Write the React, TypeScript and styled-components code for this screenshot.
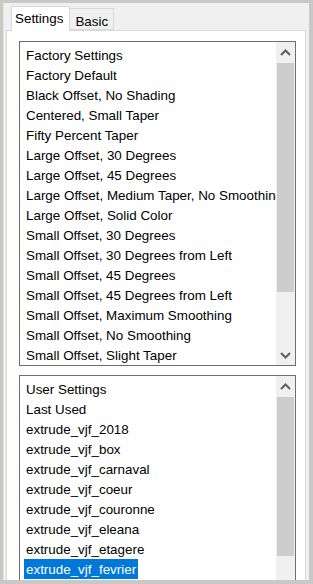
import styled, { createGlobalStyle } from "styled-components";

const GlobalStyle = createGlobalStyle`
  html, body {
    margin: 0;
    padding: 0;
    background: #c8c8c8;
    overflow: hidden;
  }
  body {
    font-family: "Liberation Sans", Arial, sans-serif;
    font-size: 13.4px;
    color: #000;
  }
`;

const Frame = styled.div`
  width: 313px;
  height: 584px;
  padding: 3px 4px 4px 3px;
  box-sizing: border-box;
  background: #c8c8c8;
`;

const Window = styled.div`
  height: 577px;
  background: #f0f0f0;
  border-left: 1px solid #e3e8c8;
  padding: 0 3px 0 2px;
  display: flex;
  flex-direction: column;
  overflow: hidden;
`;

const TabStrip = styled.div`
  height: 27px;
  display: flex;
  align-items: flex-end;
  padding-left: 5px;
  position: relative;
  z-index: 1;
`;

const Tab = styled.div<{ $active?: boolean }>`
  box-sizing: border-box;
  height: ${(p) => (p.$active ? "25px" : "22px")};
  margin-bottom: ${(p) => (p.$active ? "-1px" : "0")};
  padding: ${(p) => (p.$active ? "3px 6px 0 3px" : "4px 5px 0 5px")};
  background: ${(p) => (p.$active ? "#fff" : "#f0f0f0")};
  border: 1px solid #d9d9d9;
  border-bottom: ${(p) => (p.$active ? "none" : "1px solid #d9d9d9")};
  border-left: ${(p) => (p.$active ? "1px solid #d9d9d9" : "none")};
  line-height: 17px;
`;

const Panel = styled.div`
  flex: 1;
  background: #fff;
  border: 1px solid #d9d9d9;
  border-bottom: none;
  padding: 10px 9px 0 12px;
  display: flex;
  flex-direction: column;
  gap: 9px;
  min-height: 0;
`;

const ListBox = styled.div<{ $height: number }>`
  height: ${(p) => p.$height}px;
  flex-shrink: 0;
  border: 1px solid #6e6e6e;
  display: flex;
  background: #fff;
  overflow: hidden;
`;

const Items = styled.div`
  flex: 1;
  min-width: 0;
  padding-top: 3px;
  overflow: hidden;
`;

const Row = styled.div`
  height: 20px;
  padding-left: 4px;
  white-space: nowrap;
  overflow: hidden;
`;

const Label = styled.span<{ $selected?: boolean }>`
  display: inline-block;
  box-sizing: border-box;
  height: 20px;
  line-height: 19px;
  padding: 1px 2px 0;
  background: ${(p) => (p.$selected ? "#0078d7" : "transparent")};
  color: ${(p) => (p.$selected ? "#fff" : "#000")};
`;

const ScrollBar = styled.div`
  width: 19px;
  flex-shrink: 0;
  background: #f0f0f0;
  display: flex;
  flex-direction: column;
`;

const Arrow = styled.div`
  height: 20px;
  flex-shrink: 0;
  display: flex;
  align-items: center;
  justify-content: center;
`;

const Track = styled.div<{ $before: number; $after: number }>`
  flex: 1;
  padding: ${(p) => `${p.$before}px 0 ${p.$after}px`};
  display: flex;
  flex-direction: column;
`;

const Thumb = styled.div`
  flex: 1;
  background: #cdcdcd;
  margin: 0 1px;
`;

function Chevron({ up }: { up?: boolean }) {
  return (
    <svg width="11" height="7" viewBox="0 0 11 7">
      <path
        d={up ? "M1 6 L5.5 1.5 L10 6" : "M1 1 L5.5 5.5 L10 1"}
        fill="none"
        stroke="#606060"
        strokeWidth="2"
      />
    </svg>
  );
}

const factory = [
  "Factory Settings",
  "Factory Default",
  "Black Offset, No Shading",
  "Centered, Small Taper",
  "Fifty Percent Taper",
  "Large Offset, 30 Degrees",
  "Large Offset, 45 Degrees",
  "Large Offset, Medium Taper, No Smoothing",
  "Large Offset, Solid Color",
  "Small Offset, 30 Degrees",
  "Small Offset, 30 Degrees from Left",
  "Small Offset, 45 Degrees",
  "Small Offset, 45 Degrees from Left",
  "Small Offset, Maximum Smoothing",
  "Small Offset, No Smoothing",
  "Small Offset, Slight Taper",
];

const user = [
  "User Settings",
  "Last Used",
  "extrude_vjf_2018",
  "extrude_vjf_box",
  "extrude_vjf_carnaval",
  "extrude_vjf_coeur",
  "extrude_vjf_couronne",
  "extrude_vjf_eleana",
  "extrude_vjf_etagere",
  "extrude_vjf_fevrier",
];

type ListProps = {
  items: string[];
  height: number;
  selected?: string;
  thumbBefore: number;
  thumbAfter: number;
  showDown: boolean;
};

function List({ items, height, selected, thumbBefore, thumbAfter, showDown }: ListProps) {
  return (
    <ListBox $height={height}>
      <Items>
        {items.map((it) => (
          <Row key={it}>
            <Label $selected={it === selected}>{it}</Label>
          </Row>
        ))}
      </Items>
      <ScrollBar>
        <Arrow>
          <Chevron up />
        </Arrow>
        <Track $before={thumbBefore} $after={thumbAfter}>
          <Thumb />
        </Track>
        {showDown ? (
          <Arrow>
            <Chevron />
          </Arrow>
        ) : null}
      </ScrollBar>
    </ListBox>
  );
}

export default function App() {
  return (
    <Frame>
      <GlobalStyle />
      <Window>
        <TabStrip>
          <Tab $active>Settings</Tab>
          <Tab>Basic</Tab>
        </TabStrip>
        <Panel>
          <List
            items={factory}
            height={323}
            thumbBefore={1}
            thumbAfter={53}
            showDown
          />
          <List
            items={user}
            height={230}
            selected="extrude_vjf_fevrier"
            thumbBefore={1}
            thumbAfter={50}
            showDown={false}
          />
        </Panel>
      </Window>
    </Frame>
  );
}
